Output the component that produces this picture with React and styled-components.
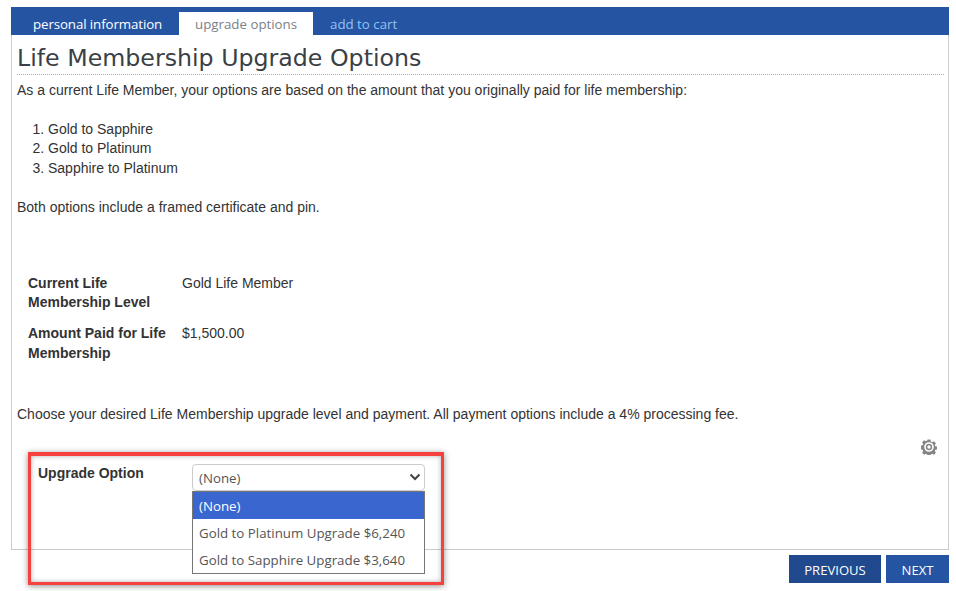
import React from "react";
import styled, { createGlobalStyle } from "styled-components";

const Global = createGlobalStyle`
  html, body { margin: 0; padding: 0; background: #fff; }
  body { font-family: "Liberation Sans", Arial, sans-serif; font-size: 14px; color: #333; }
  ol, p, h1 { margin: 0; }
`;

const Page = styled.div`
  position: relative;
  width: 956px;
  height: 591px;
  overflow: hidden;
  padding: 7px 7px 0 11px;
  box-sizing: border-box;
`;
const TabBar = styled.div`
  display: flex;
  align-items: flex-end;
  height: 28px;
  background: #2554a3;
  padding-left: 10px;
`;
const Tab = styled.div`
  height: 23px;
  line-height: 24px;
  box-sizing: border-box;
  width: ${p => p.$w}px;
  padding-left: ${p => p.$pad}px;
  font-family: "Open Sans", sans-serif;
  font-size: 13.3px;
  letter-spacing: ${p => p.$ls || 0}px;
  white-space: nowrap;
  background: ${p => (p.$active ? "#fff" : "transparent")};
  color: ${p => p.$color};
`;
const Panel = styled.div`
  height: 514px;
  box-sizing: content-box;
  border: 1px solid #ccc;
  border-top: 0;
  position: relative;
`;
const Heading = styled.h1`
  margin: 0 4px 0 5px;
  height: 40px;
  line-height: 46px;
  box-sizing: border-box;
  border-bottom: 1px dotted #aaa;
  font-family: "DejaVu Sans", Verdana, sans-serif;
  font-weight: 400;
  font-size: 23.7px;
  color: #3b3f46;
  white-space: nowrap;
`;
const Body = styled.div`
  padding: 0 5px;
  line-height: 19.6px;
  color: #333;
`;
const Para = styled.p`
  margin-top: ${p => p.$top}px;
`;
const List = styled.ol`
  margin: 19px 0 0 0;
  padding-left: 31px;
`;
const InfoGrid = styled.div`
  display: grid;
  grid-template-columns: 154px 1fr;
  row-gap: 11.3px;
  margin: 55.7px 0 0 11px;
`;
const InfoLabel = styled.div`
  font-weight: 700;
  width: 145px;
`;
const InfoValue = styled.div``;
const GearRow = styled.div`
  display: flex;
  justify-content: flex-end;
  margin: 14px 6px 0 0;
  height: 16px;
  color: #858585;
`;
const FormRow = styled.div`
  display: flex;
  margin: 9px 0 0 21px;
`;
const FormLabel = styled.label`
  width: 154px;
  font-weight: 700;
`;
const SelectBox = styled.div`
  position: relative;
  width: 233px;
  height: 27px;
  box-sizing: border-box;
  border: 1px solid #ccc;
  border-radius: 4px;
  background: #fff;
  font-family: "Open Sans", sans-serif;
  font-size: 13.3px;
  line-height: 21px;
  padding: 3px 3px 0 6px;
  color: #555;
  display: flex;
  justify-content: space-between;
  align-items: center;
`;
const ChevronSlot = styled.span`
  display: flex;
  margin-top: -3px;
`;
const Menu = styled.div`
  position: absolute;
  left: -1px;
  top: 26px;
  width: 233px;
  box-sizing: border-box;
  border: 1px solid #767676;
  background: #fff;
  z-index: 2;
`;
const MenuItem = styled.div`
  height: 27px;
  line-height: 29px;
  padding-left: 6px;
  font-family: "Open Sans", sans-serif;
  font-size: 13.3px;
  white-space: nowrap;
  background: ${p => (p.$selected ? "#3966cf" : "#fff")};
  color: ${p => (p.$selected ? "#fff" : "#555")};
`;
const Footer = styled.div`
  display: flex;
  justify-content: flex-end;
  gap: 5px;
  margin-top: 5px;
`;
const Button = styled.button`
  height: 28px;
  width: ${p => p.$w}px;
  border: 0;
  padding: 1px 0 0;
  background: ${p => p.$bg};
  color: #fff;
  font-family: "Open Sans", sans-serif;
  font-size: 13.1px;
  line-height: 26px;
`;
const Highlight = styled.div`
  position: absolute;
  left: 28px;
  top: 452px;
  width: 416px;
  height: 133px;
  box-sizing: border-box;
  border: 3px solid #f7413f;
  border-top-width: 4px;
  box-shadow: 0 1px 6px rgba(0, 0, 0, 0.45), inset 0 0 5px rgba(0, 0, 0, 0.3);
  pointer-events: none;
  z-index: 3;
`;

const Gear = () => (
  <svg width="16" height="16" viewBox="0 0 16 16" aria-hidden="true">
    <g fill="currentColor">
      <path fillRule="evenodd" d="M6.6 0.6h2.8l.4 2 1.3.6 1.8-1 2 2-1.1 1.7.6 1.3 2 .4v2.8l-2 .4-.6 1.3 1.1 1.7-2 2-1.8-1-1.3.6-.4 2H6.6l-.4-2-1.3-.6-1.8 1-2-2 1.1-1.7-.6-1.3-2-.4V6.6l2-.4.6-1.3-1.1-1.7 2-2 1.8 1 1.3-.6zM8 3.2a4.8 4.8 0 1 0 0 9.6 4.8 4.8 0 0 0 0-9.6z" />
      <path fillRule="evenodd" d="M8 4.8a3.2 3.2 0 1 1 0 6.4 3.2 3.2 0 0 1 0-6.4zm0 1.5a1.7 1.7 0 1 0 0 3.4 1.7 1.7 0 0 0 0-3.4z" />
    </g>
  </svg>
);

const Chevron = () => (
  <svg width="12" height="8" viewBox="0 0 12 8" aria-hidden="true">
    <path d="M1.5 1.5L6 6l4.5-4.5" fill="none" stroke="#444" strokeWidth="2" />
  </svg>
);

export default function App() {
  return (
    <Page>
      <Global />
      <TabBar>
        <Tab $w={158} $pad={12} $ls={-0.1} $color="#fff">personal information</Tab>
        <Tab $w={134} $pad={16} $active $color="#7b8188">upgrade options</Tab>
        <Tab $w={102} $pad={17} $color="#93c2f0">add to cart</Tab>
      </TabBar>
      <Panel>
        <Heading>Life Membership Upgrade Options</Heading>
        <Body>
          <Para $top={6}>As a current Life Member, your options are based on the amount that you originally paid for life membership:</Para>
          <List>
            <li>Gold to Sapphire</li>
            <li>Gold to Platinum</li>
            <li>Sapphire to Platinum</li>
          </List>
          <Para $top={20}>Both options include a framed certificate and pin.</Para>
          <InfoGrid>
            <InfoLabel>Current Life Membership Level</InfoLabel>
            <InfoValue>Gold Life Member</InfoValue>
            <InfoLabel>Amount Paid for Life Membership</InfoLabel>
            <InfoValue>$1,500.00</InfoValue>
          </InfoGrid>
          <Para $top={42}>Choose your desired Life Membership upgrade level and payment. All payment options include a 4% processing fee.</Para>
          <GearRow><Gear /></GearRow>
          <FormRow>
            <FormLabel>Upgrade Option</FormLabel>
            <SelectBox>
              (None)
              <ChevronSlot><Chevron /></ChevronSlot>
              <Menu>
                <MenuItem $selected>(None)</MenuItem>
                <MenuItem>Gold to Platinum Upgrade $6,240</MenuItem>
                <MenuItem>Gold to Sapphire Upgrade $3,640</MenuItem>
              </Menu>
            </SelectBox>
          </FormRow>
        </Body>
      </Panel>
      <Footer>
        <Button $w={92} $bg="#204a8d">PREVIOUS</Button>
        <Button $w={63} $bg="#2554a3">NEXT</Button>
      </Footer>
      <Highlight />
    </Page>
  );
}
